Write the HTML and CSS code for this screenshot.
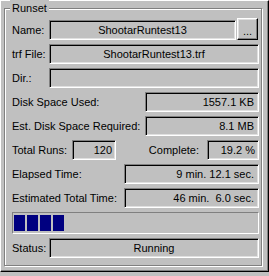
FILE: index.html
```html
<!DOCTYPE html>
<html lang="en">

<head>
    <meta charset="UTF-8">
    <title>Runset</title>
    <link rel="stylesheet" href="styles.css">
</head>

<body>
    <div class="panel">
        <div class="group">
            <span class="group-title">Runset</span>

            <div class="row row-name">
                <span class="label label-short">Name:</span>
                <div class="field center">ShootarRuntest13</div>
                <button class="browse">...</button>
            </div>
            <div class="row">
                <span class="label label-short">trf File:</span>
                <div class="field center">ShootarRuntest13.trf</div>
            </div>
            <div class="row">
                <span class="label label-short">Dir.:</span>
                <div class="field"></div>
            </div>
            <div class="row row-spaced">
                <span class="label label-wide">Disk Space Used:</span>
                <div class="field right">1557.1 KB</div>
            </div>
            <div class="row row-spaced">
                <span class="label label-wide">Est. Disk Space Required:</span>
                <div class="field right">8.1 MB</div>
            </div>
            <div class="row row-spaced">
                <span class="label label-runs">Total Runs:</span>
                <div class="field right field-runs">120</div>
                <span class="label label-complete">Complete:</span>
                <div class="field right field-complete">19.2 %</div>
            </div>
            <div class="row">
                <span class="label label-time">Elapsed Time:</span>
                <div class="field right">9 min. 12.1 sec.</div>
            </div>
            <div class="row">
                <span class="label label-time">Estimated Total Time:</span>
                <div class="field right">46 min.&nbsp; 6.0 sec.</div>
            </div>
            <div class="progress">
                <span class="block"></span>
                <span class="block"></span>
                <span class="block"></span>
                <span class="block"></span>
            </div>
            <div class="row row-status">
                <span class="label label-short">Status:</span>
                <div class="field center">Running</div>
            </div>
        </div>
    </div>
</body>

</html>
```

FILE: styles.css
```css
body {
    margin: 0;
    width: 269px;
    height: 276px;
    background: #c0c0c0;
    font-family: "Liberation Sans", Arial, sans-serif;
    font-size: 11px;
    color: #000;
}

.panel {
    box-sizing: border-box;
    width: 269px;
    height: 272px;
    padding: 7px 0 0 3px;
    border: 1px solid;
    border-color: #fff #000 #000 #fff;
    box-shadow: inset -1px -1px #808080;
}

.group {
    position: relative;
    box-sizing: border-box;
    width: 258px;
    height: 258px;
    padding: 11px 2px 0 7px;
    border: 1px solid #808080;
    box-shadow: inset 1px 1px #fff, 1px 1px #fff;
}

.group-title {
    position: absolute;
    top: -9px;
    left: 5px;
    padding: 0 2px;
    line-height: 16px;
    background: #c0c0c0;
}

.row {
    display: flex;
    align-items: center;
    height: 20px;
    margin-bottom: 4px;
}

.row-spaced {
    margin-top: 1px;
}

.row-status {
    margin-top: 4px;
}

.label {
    flex: none;
    white-space: nowrap;
}

.label-short {
    width: 37px;
}

.label-wide {
    width: 133px;
}

.label-runs {
    width: 60px;
}

.label-time {
    width: 112px;
}

.label-complete {
    flex: 1;
    text-align: right;
    padding-right: 8px;
}

.field {
    flex: 1;
    box-sizing: border-box;
    height: 20px;
    padding: 0 4px;
    line-height: 18px;
    white-space: nowrap;
    border: 1px solid;
    border-color: #808080 #fff #fff #808080;
    box-shadow: inset 1px 1px #000, inset -1px -1px #dfdfdf;
}

.center {
    text-align: center;
}

.right {
    text-align: right;
}

.field-runs {
    flex: none;
    width: 44px;
    padding-right: 3px;
}

.field-complete {
    flex: none;
    width: 52px;
    padding-right: 3px;
}

.row-name .field {
    flex: none;
    width: 187px;
}

.browse {
    box-sizing: border-box;
    align-self: flex-end;
    width: 21px;
    height: 22px;
    margin-left: 1px;
    padding: 4px 0 0;
    font-family: inherit;
    font-size: 11px;
    line-height: 14px;
    color: #000;
    background: #c0c0c0;
    border: 1px solid;
    border-color: #fff #000 #000 #fff;
    box-shadow: inset -1px -1px #808080, inset 1px 1px #dfdfdf;
}

.progress {
    display: flex;
    gap: 2px;
    box-sizing: border-box;
    height: 22px;
    padding: 2px 1px;
    border: 1px solid;
    border-color: #808080 #fff #fff #808080;
}

.block {
    width: 11px;
    background: #000080;
}
```
